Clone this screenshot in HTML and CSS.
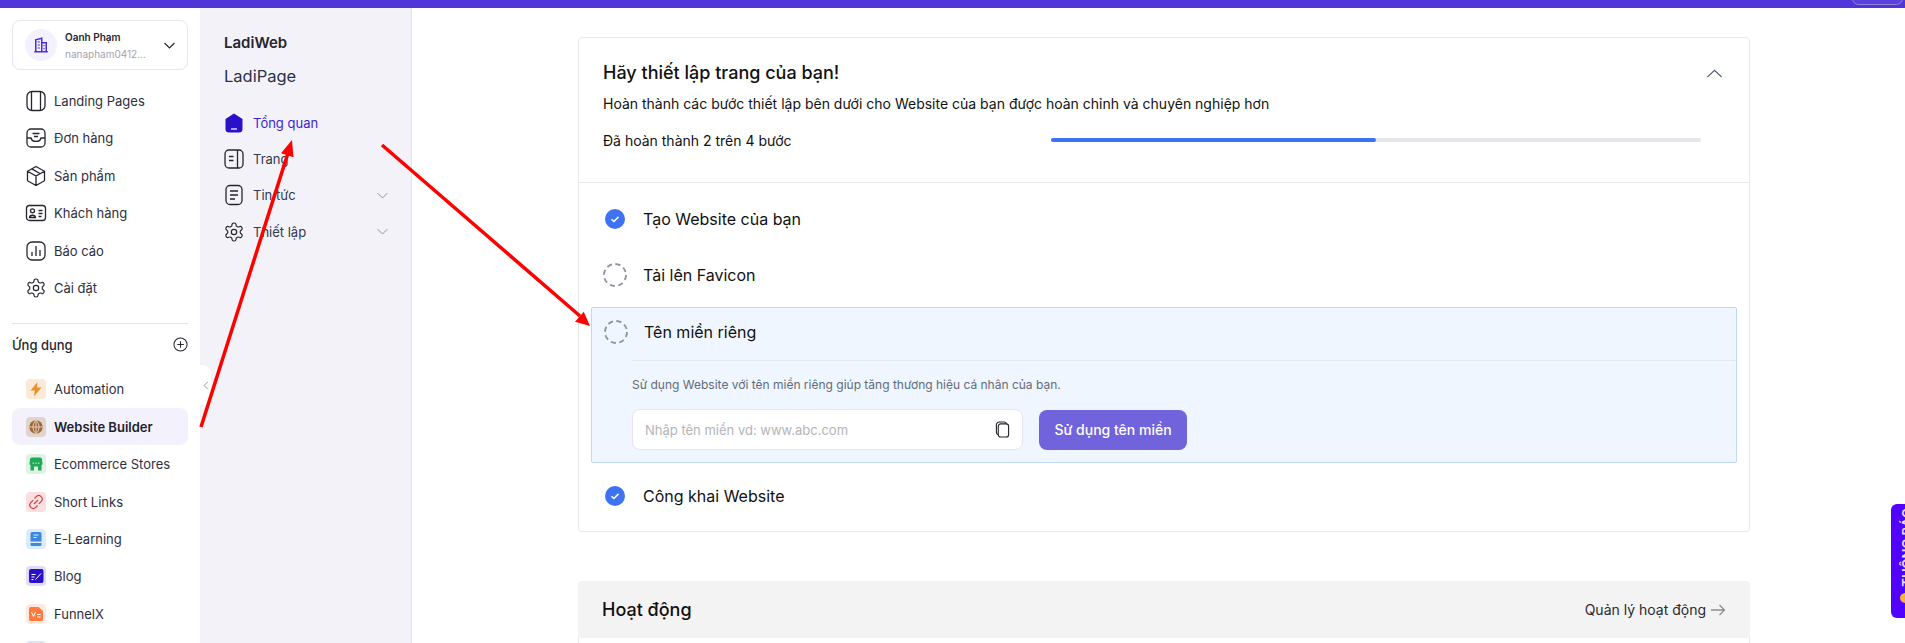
FILE: index.html
```html
<!DOCTYPE html>
<html lang="vi">
<head>
    <meta charset="UTF-8">
    <meta name="viewport" content="width=device-width, initial-scale=1.0">
    <title>LadiWeb - Tổng quan</title>
    <link rel="stylesheet" href="styles.css">
</head>
<body>
    <header class="top-bar"><span class="top-pill"></span></header>

    <svg class="hidden-defs" width="0" height="0">
        <symbol id="gear" viewBox="-1.300 -1.300 26.600 26.600">
            <path d="M12.22 2h-.44a2 2 0 0 0-2 2v.18a2 2 0 0 1-1 1.73l-.43.25a2 2 0 0 1-2 0l-.15-.08a2 2 0 0 0-2.73.73l-.22.38a2 2 0 0 0 .73 2.73l.15.1a2 2 0 0 1 1 1.72v.51a2 2 0 0 1-1 1.74l-.15.09a2 2 0 0 0-.73 2.73l.22.38a2 2 0 0 0 2.73.73l.15-.08a2 2 0 0 1 2 0l.43.25a2 2 0 0 1 1 1.73V20a2 2 0 0 0 2 2h.44a2 2 0 0 0 2-2v-.18a2 2 0 0 1 1-1.73l.43-.25a2 2 0 0 1 2 0l.15.08a2 2 0 0 0 2.73-.73l.22-.39a2 2 0 0 0-.73-2.73l-.15-.08a2 2 0 0 1-1-1.74v-.5a2 2 0 0 1 1-1.74l.15-.09a2 2 0 0 0 .73-2.73l-.22-.38a2 2 0 0 0-2.73-.73l-.15.08a2 2 0 0 1-2 0l-.43-.25a2 2 0 0 1-1-1.73V4a2 2 0 0 0-2-2z"/>
            <circle cx="12" cy="12" r="3"/>
        </symbol>
        <symbol id="chevron" viewBox="0 0 24 24"><path d="M4 8l8 8 8-8"/></symbol>
        <symbol id="done" viewBox="0 0 20 20">
            <circle cx="10" cy="10" r="10" fill="#3e72f3"/>
            <path d="M6.500 10.200l2.400 2.300 4.600-4.600" fill="none" stroke="#fff" stroke-width="1.500"/>
        </symbol>
        <symbol id="todo" viewBox="0 0 24 24">
            <circle cx="12" cy="12" r="11" fill="none" stroke="#8b93a1" stroke-width="1.800" stroke-dasharray="5.200 3.440"/>
        </symbol>
    </svg>

    <div class="app">
        <!-- Menu chính -->
        <aside class="sidebar">
            <div class="account">
                <span class="account-logo">
                    <svg viewBox="0 0 24 24" width="18" height="18"><path d="M3 21h18M5 21V5l8-2v18M13 9h6v12" fill="none" stroke="#4a2fd6" stroke-width="2"/><path d="M7.500 8h3M7.500 12h3M7.500 16h3M15 13h2M15 17h2" stroke="#4a2fd6" stroke-width="1.600"/></svg>
                </span>
                <div class="account-text">
                    <strong>Oanh Phạm</strong>
                    <span>nanapham0412...</span>
                </div>
                <svg class="account-arrow"><use href="#chevron"/></svg>
            </div>

            <nav class="main-nav">
                <a href="#"><svg class="nav-icon" viewBox="0 0 24 24"><rect x="3" y="2.500" width="18" height="19" rx="5"/><path d="M7.500 3v18M16.500 3v18"/></svg>Landing Pages</a>
                <a href="#"><svg class="nav-icon" viewBox="0 0 24 24"><rect x="3" y="3" width="18" height="18" rx="4"/><path d="M3 12h4c1 4.500 9 4.500 10 0h4M8.500 7.500h7M10 10.500h4"/></svg>Đơn hàng</a>
                <a href="#"><svg class="nav-icon" viewBox="0 0 24 24"><path d="M12 2.500l8.500 4.800v9.400L12 21.500l-8.500-4.800V7.300zM3.500 7.300L12 12l8.500-4.700M12 12v9.500M7.800 4.900l8.500 4.800"/></svg>Sản phẩm</a>
                <a href="#"><svg class="nav-icon" viewBox="0 0 24 24"><rect x="2.500" y="4.500" width="19" height="15" rx="3"/><circle cx="8.500" cy="9.800" r="2"/><path d="M5.500 16.500c.3-3 5.700-3 6 0zM14.500 9.500h4M14.500 12.500h4M14.500 15.500h3"/></svg>Khách hàng</a>
                <a href="#"><svg class="nav-icon" viewBox="0 0 24 24"><rect x="3" y="3" width="18" height="18" rx="5"/><path d="M8 17v-4M12 17V7M16 17v-6"/></svg>Báo cáo</a>
                <a href="#"><svg class="nav-icon"><use href="#gear"/></svg>Cài đặt</a>
            </nav>

            <div class="apps-head">
                <span>Ứng dụng</span>
                <svg viewBox="0 0 16 16" width="15" height="15"><circle cx="8" cy="8" r="7" fill="none" stroke="#26262f" stroke-width="1.100"/><path d="M8 4.500v7M4.500 8h7" stroke="#26262f" stroke-width="1.100"/></svg>
            </div>

            <nav class="apps-nav">
                <a href="#"><span class="app-icon bg-orange"><svg viewBox="0 0 20 20"><path d="M11.500 3L4.500 11.500h4.300L8 17.500l7.500-9h-4.500z" fill="#e8922c"/></svg></span>Automation</a>
                <a href="#" class="active"><span class="app-icon bg-brown"><svg viewBox="0 0 20 20"><circle cx="10" cy="10" r="6.700" fill="#a4652d"/><path d="M10 3.300v13.400M3.500 10h13M10 3.300c-4 3.500-4 9.900 0 13.400M10 3.300c4 3.500 4 9.900 0 13.400" fill="none" stroke="#e0d5ce" stroke-width="1"/></svg></span>Website Builder</a>
                <a href="#"><span class="app-icon bg-green"><svg viewBox="0 0 20 20"><path d="M6 3.500h8a2 2 0 0 1 2 2l.5 4a2 2 0 0 1-1 1.700v5.300H12v-4H8v4H4.500v-5.300a2 2 0 0 1-1-1.700L4 5.500a2 2 0 0 1 2-2z" fill="#1fa855"/><path d="M7.200 8.500V10M12.800 8.500V10M10 8.500V10" stroke="#dff2e4" stroke-width="1"/></svg></span>Ecommerce Stores</a>
                <a href="#"><span class="app-icon bg-red"><svg viewBox="0 0 20 20"><path d="M8.500 6.500l1.800-1.800a3.300 3.300 0 0 1 4.900 4.700l-2.400 2.400M11.500 13.500l-1.800 1.800a3.300 3.300 0 0 1-4.900-4.700l2.400-2.400M8 12l4-4" fill="none" stroke="#c9444e" stroke-width="1.200"/></svg></span>Short Links</a>
                <a href="#"><span class="app-icon bg-blue"><svg viewBox="0 0 20 20"><path d="M4.500 4.500A1.500 1.500 0 0 1 6 3h8a1.500 1.500 0 0 1 1.500 1.500v8h-11z" fill="#3d88dd"/><path d="M4.500 14h11v1.500A1.500 1.500 0 0 1 14 17H6a1.500 1.500 0 0 1-1.500-1.500z" fill="#3d88dd"/><path d="M7.500 6h5M7.500 8.500h3" stroke="#dcebfa" stroke-width="1"/></svg></span>E-Learning</a>
                <a href="#"><span class="app-icon bg-violet"><svg viewBox="0 0 20 20"><rect x="3" y="3" width="14.500" height="14" rx="2" fill="#2a10c8"/><path d="M5.500 8.500h4M5.500 11h3M5.500 13.500h2M9.500 13.500l5.500-6" stroke="#fff" stroke-width="1"/></svg></span>Blog</a>
                <a href="#"><span class="app-icon bg-peach"><svg viewBox="0 0 20 20"><path d="M3 4.500A1.500 1.500 0 0 1 4.500 3h8L17 7v8.500a1.500 1.500 0 0 1-1.500 1.500h-11A1.500 1.500 0 0 1 3 15.500z" fill="#ff7b3e"/><path d="M5.500 8l2 4.500L9.500 8M11 10.500h3.500M11 13h3.500" fill="none" stroke="#fff" stroke-width="1"/></svg></span>FunnelX</a>
                <a href="#"><span class="app-icon bg-grey"></span></a>
            </nav>
        </aside>

        <!-- Menu phụ -->
        <aside class="subnav">
            <span class="collapse-tab"><svg viewBox="0 0 8 12" width="6" height="9"><path d="M6.500 1L1.500 6l5 5" fill="none" stroke="#8d8d96" stroke-width="1.200"/></svg></span>
            <h2>LadiWeb</h2>
            <p class="subnav-site">LadiPage</p>
            <ul>
                <li class="current"><svg class="nav-icon" viewBox="0 0 24 24"><path d="M12 2.500l8.500 5.500v10a3.500 3.500 0 0 1-3.500 3.500H7A3.500 3.500 0 0 1 3.500 18V8z" fill="#2a10c8" stroke="none"/><path d="M9 18h6" stroke="#d9d4f5" stroke-width="1.500"/></svg>Tổng quan</li>
                <li><svg class="nav-icon" viewBox="0 0 24 24"><rect x="3" y="3" width="18" height="18" rx="4"/><path d="M15.500 3v18M7 9.500h4.500M7 13.500h4.500"/></svg>Trang</li>
                <li><svg class="nav-icon" viewBox="0 0 24 24"><rect x="4" y="2.500" width="16" height="19" rx="4"/><path d="M8 8h8M8 12h8M8 16h5"/></svg>Tin tức<svg class="sub-arrow"><use href="#chevron"/></svg></li>
                <li><svg class="nav-icon"><use href="#gear"/></svg>Thiết lập<svg class="sub-arrow"><use href="#chevron"/></svg></li>
            </ul>
        </aside>

        <!-- Nội dung -->
        <main class="content">
            <section class="setup-card">
                <div class="setup-head">
                    <div class="setup-title">
                        <h1>Hãy thiết lập trang của bạn!</h1>
                        <svg viewBox="0 0 18 10" width="17" height="9"><path d="M1 9l8-7.500L17 9" fill="none" stroke="#4f5b70" stroke-width="1.300"/></svg>
                    </div>
                    <p class="setup-desc">Hoàn thành các bước thiết lập bên dưới cho Website của bạn được hoàn chỉnh và chuyên nghiệp hơn</p>
                    <div class="setup-progress">
                        <span>Đã hoàn thành 2 trên 4 bước</span>
                        <div class="track"><div class="fill" style="width: 50%"></div></div>
                    </div>
                </div>

                <div class="steps">
                    <div class="step"><span class="step-mark"><svg class="mark-done"><use href="#done"/></svg></span>Tạo Website của bạn</div>
                    <div class="step"><span class="step-mark"><svg class="mark-todo"><use href="#todo"/></svg></span>Tải lên Favicon</div>

                    <div class="step-open">
                        <div class="step step-open-head"><span class="step-mark"><svg class="mark-todo"><use href="#todo"/></svg></span>Tên miền riêng</div>
                        <div class="step-body">
                            <p>Sử dụng Website với tên miền riêng giúp tăng thương hiệu cá nhân của bạn.</p>
                            <div class="domain-form">
                                <div class="domain-input">
                                    <span>Nhập tên miền vd: www.abc.com</span>
                                    <svg viewBox="0 0 16 18" width="15" height="17"><rect x="3.500" y="3" width="11" height="14" rx="2.500" fill="none" stroke="#26262f" stroke-width="1.200"/><path d="M3.500 14.500A2.500 2.500 0 0 1 1.500 12V4A3 3 0 0 1 4.500 1H10a2.500 2.500 0 0 1 2.300 2" fill="none" stroke="#26262f" stroke-width="1.200"/></svg>
                                </div>
                                <button type="button">Sử dụng tên miền</button>
                            </div>
                        </div>
                    </div>

                    <div class="step"><span class="step-mark"><svg class="mark-done"><use href="#done"/></svg></span>Công khai Website</div>
                </div>
            </section>

            <section class="activity">
                <div class="activity-head">
                    <h2>Hoạt động</h2>
                    <a href="#">Quản lý hoạt động<svg viewBox="0 0 16 12" width="16" height="12"><path d="M1 6h13.500M9.500 1l5 5-5 5" fill="none" stroke="#8e8e8e" stroke-width="1.300"/></svg></a>
                </div>
            </section>
        </main>
    </div>

    <div class="notice-tab"><span class="notice-dot"></span><span class="notice-text">THÔNG BÁO</span></div>

    <!-- Mũi tên đỏ vẽ đè lên ảnh chụp -->
    <svg class="annotations" viewBox="0 0 1905 643" width="1905" height="643">
        <path d="M201 427L288 153M382 145L580 316" fill="none" stroke="#ff0000" stroke-width="3.500"/>
        <path d="M292 140L293.500 157.300L281 153.300z" fill="#ff0000"/>
        <path d="M590 326L575 321.800L583.800 311.800z" fill="#ff0000"/>
    </svg>
</body>
</html>
```

FILE: styles.css
```css
/* Styles globaux */
* {
    box-sizing: border-box;
}

body {
    margin: 0;
    height: 100vh;
    overflow: hidden;
    background-color: #fff;
    color: #26262f;
    font-family: Inter, "Noto Sans", sans-serif;
    display: flex;
    flex-direction: column;
}

a {
    color: inherit;
    text-decoration: none;
}

.hidden-defs {
    position: absolute;
}

/* Barre du haut */
.top-bar {
    flex: none;
    height: 8px;
    background-color: #5036d9;
    position: relative;
}

.top-pill {
    position: absolute;
    left: 1852px;
    top: -8px;
    width: 51px;
    height: 13px;
    border: 1px solid #8f84dd;
    border-radius: 10px;
    background-color: #5a40dc;
}

.app {
    flex: 1;
    display: flex;
    min-height: 0;
    overflow: hidden;
}

/* Menu principal */
.sidebar {
    flex: none;
    width: 200px;
    padding: 12px 12px 0;
    overflow: hidden;
}

.account {
    height: 50px;
    border: 1px solid #e6e6f0;
    border-radius: 8px;
    display: flex;
    align-items: center;
    padding: 0 12px;
}

.account-logo {
    flex: none;
    width: 32px;
    height: 32px;
    border-radius: 50%;
    background-color: #f3f1fd;
    display: flex;
    align-items: center;
    justify-content: center;
}

.account-text {
    flex: 1;
    margin: 2px 0 0 8px;
    display: flex;
    flex-direction: column;
    gap: 3px;
}

.account-text strong {
    font-size: 10px;
    line-height: 13px;
    font-weight: 600;
}

.account-text span {
    font-size: 10px;
    line-height: 14px;
    color: #a3a3b5;
}

.account-arrow {
    flex: none;
    width: 15px;
    height: 15px;
    margin-right: -2px;
    fill: none;
    stroke: #26262f;
    stroke-width: 1.800;
}

.nav-icon {
    flex: none;
    width: 24px;
    height: 24px;
    fill: none;
    stroke: #26262f;
    stroke-width: 1.300;
}

.main-nav {
    margin-top: 12.300px;
    padding-bottom: 16px;
    border-bottom: 1px solid #e3e3e8;
}

.main-nav a {
    height: 37.400px;
    display: flex;
    align-items: center;
    gap: 6px;
    padding-left: 12px;
    font-size: 13px;
    color: #2e2e3e;
}

.apps-head {
    height: 47px;
    padding-bottom: 5px;
    display: flex;
    align-items: center;
    justify-content: space-between;
    font-size: 13px;
    font-weight: 500;
}

.apps-nav {
    height: 273px;
    overflow: hidden;
}

.apps-nav a {
    height: 37.400px;
    display: flex;
    align-items: center;
    gap: 8px;
    padding-left: 14px;
    border-radius: 8px;
    font-size: 13px;
    color: #2e2e3e;
}

.apps-nav a.active {
    background-color: #f3f2fc;
    font-weight: 600;
    color: #1f1f2e;
}

.app-icon {
    flex: none;
    width: 20px;
    height: 20px;
    border-radius: 4px;
    display: block;
}

.app-icon svg {
    display: block;
    width: 20px;
    height: 20px;
}

.bg-orange { background-color: #fbe9d7; }
.bg-brown { background-color: #e0d5ce; }
.bg-green { background-color: #dff2e4; }
.bg-red { background-color: #fbdfe0; }
.bg-blue { background-color: #dcebfa; }
.bg-violet { background-color: #e0dcf8; }
.bg-peach { background-color: #ffe8df; }
.bg-grey { background-color: #dfe3f5; }

/* Menu secondaire */
.subnav {
    flex: none;
    width: 212px;
    background-color: #f3f2f8;
    border-right: 1px solid #e3e3e8;
    padding: 25px 0 0 24px;
    position: relative;
}

.collapse-tab {
    position: absolute;
    left: 0;
    top: 357px;
    width: 11px;
    height: 40px;
    background-color: #fff;
    border-radius: 0 8px 8px 0;
    display: flex;
    align-items: center;
    justify-content: center;
}

.subnav h2 {
    margin: 0;
    font-size: 15px;
    line-height: 20px;
    font-weight: 600;
}

.subnav-site {
    margin: 12px 0 0;
    font-size: 16.500px;
    line-height: 22px;
    color: #27324a;
}

.subnav ul {
    list-style: none;
    margin: 17.500px 0 0 -2px;
    padding: 0 21px 0 0;
}

.subnav li {
    height: 36.300px;
    display: flex;
    align-items: center;
    gap: 7px;
    font-size: 13px;
    color: #33384a;
}

.subnav li.current {
    color: #3d1fd6;
}

.sub-arrow {
    margin-left: auto;
    width: 15px;
    height: 15px;
    fill: none;
    stroke: #8d8d96;
    stroke-width: 1.500;
}

/* Contenu */
.content {
    flex: 1;
    min-width: 0;
    padding: 29px 155px 0 166px;
}

.setup-card {
    border: 1px solid #e8e8e8;
    border-radius: 4px;
}

.setup-head {
    padding: 23px 24px 32px;
    border-bottom: 1px solid #e8e8e8;
}

.setup-title {
    display: flex;
    align-items: center;
    justify-content: space-between;
    padding-right: 2px;
}

.setup-title h1 {
    margin: 0;
    font-size: 18px;
    line-height: 24px;
    font-weight: 500;
    color: #111;
}

.setup-desc {
    margin: 9px 0 0;
    font-size: 14px;
    line-height: 20px;
    color: #111;
}

.setup-progress {
    margin-top: 16px;
    height: 20px;
    display: flex;
    align-items: center;
    justify-content: space-between;
    padding-right: 24px;
    font-size: 14px;
    color: #111;
}

.track {
    width: 650px;
    height: 4px;
    border-radius: 2px;
    background-color: #e6e7ea;
}

.fill {
    height: 100%;
    border-radius: 2px;
    background-color: #3e72f3;
}

.steps {
    padding: 8px 12px 7px;
}

.step {
    height: 56px;
    display: flex;
    align-items: center;
    gap: 16px;
    padding-left: 12px;
    font-size: 16px;
    color: #111;
}

.step-mark {
    flex: none;
    width: 24px;
    height: 24px;
    display: flex;
    align-items: center;
    justify-content: center;
}

.mark-done {
    width: 20px;
    height: 20px;
}

.mark-todo {
    width: 24px;
    height: 24px;
}

.step-open {
    margin: 4px 0 5px;
    background-color: #eff6ff;
    border: 1px solid #bfd7f8;
    border-radius: 2px;
    padding-bottom: 12px;
}

.step-open-head {
    height: 48px;
}

.step-body {
    margin: 4px 0 0 40px;
    border-top: 1px solid #e3e8f0;
    padding-top: 15px;
}

.step-body p {
    margin: 0;
    font-size: 12px;
    line-height: 18px;
    color: #5f6b7a;
}

.domain-form {
    margin-top: 15px;
    display: flex;
    align-items: center;
    gap: 16px;
}

.domain-input {
    width: 391px;
    height: 41px;
    background-color: #fff;
    border: 1px solid #e3e6ee;
    border-radius: 8px;
    padding: 0 12px;
    display: flex;
    align-items: center;
    justify-content: space-between;
    font-size: 13px;
    color: #b4b4b8;
}

button {
    width: 148px;
    height: 40px;
    border: none;
    border-radius: 8px;
    background-color: #7063dc;
    color: #fff;
    font-family: inherit;
    font-size: 14px;
    font-weight: 500;
}

.activity {
    margin-top: 49px;
    border: 1px solid #e8e8e8;
    border-top: none;
    border-bottom: none;
    border-radius: 4px 4px 0 0;
    height: 62px;
}

.activity-head {
    margin: 0 -1px;
    height: 57px;
    background-color: #f3f3f3;
    border-radius: 4px 4px 0 0;
    display: flex;
    align-items: center;
    justify-content: space-between;
    padding: 0 24px 0 24px;
}

.activity-head h2 {
    margin: 0;
    font-size: 18px;
    font-weight: 500;
    color: #111;
}

.activity-head a {
    display: flex;
    align-items: center;
    gap: 4px;
    font-size: 14px;
    color: #2a2a35;
}

/* Onglet à droite */
.notice-tab {
    position: absolute;
    right: 0;
    top: 504px;
    width: 14px;
    height: 114px;
    background-color: #5200ff;
    border-radius: 6px 0 0 6px;
    overflow: hidden;
}

.notice-text {
    position: absolute;
    left: 9px;
    bottom: 31px;
    writing-mode: vertical-rl;
    transform: rotate(180deg);
    font-size: 13px;
    line-height: 14px;
    font-weight: 600;
    color: #e9e2ff;
    white-space: nowrap;
}

.notice-dot {
    position: absolute;
    left: 9px;
    top: 89px;
    width: 11px;
    height: 10px;
    border-radius: 50%;
    background-color: #f7b52c;
}

.annotations {
    position: absolute;
    left: 0;
    top: 0;
    pointer-events: none;
}
```
